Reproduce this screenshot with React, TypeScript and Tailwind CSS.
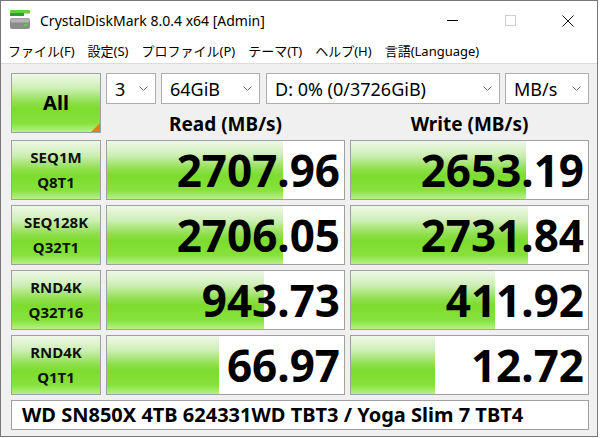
import React from 'react';

type Row = {
  top: string;
  bottom: string;
  read: string;
  readBar: number;
  write: string;
  writeBar: number;
};

const rows: Row[] = [
  { top: 'SEQ1M', bottom: 'Q8T1', read: '2707.96', readBar: 176, write: '2653.19', writeBar: 175 },
  { top: 'SEQ128K', bottom: 'Q32T1', read: '2706.05', readBar: 176, write: '2731.84', writeBar: 177 },
  { top: 'RND4K', bottom: 'Q32T16', read: '943.73', readBar: 157, write: '411.92', writeBar: 144 },
  { top: 'RND4K', bottom: 'Q1T1', read: '66.97', readBar: 112, write: '12.72', writeBar: 84 },
];

const menu = ['ファイル(F)', '設定(S)', 'プロファイル(P)', 'テーマ(T)', 'ヘルプ(H)', '言語(Language)'];

const green =
  'bg-[linear-gradient(to_bottom,#eef8e8_0%,#cdeeb4_25%,#8fe04e_48%,#7ddc2e_60%,#86e23c_85%,#b6f288_100%)]';

function Chevron() {
  return (
    <svg width="9" height="5" viewBox="0 0 9 5" className="shrink-0">
      <polyline points="0.5,0.5 4.5,4.5 8.5,0.5" fill="none" stroke="#6e6e6e" strokeWidth="1" />
    </svg>
  );
}

function Select({ value, width }: { value: string; width: string }) {
  return (
    <div
      className={`${width} h-[31px] bg-white border border-[#adadad] flex items-center pl-[8px] pr-[7px] text-[18px] text-black`}
    >
      <span className="flex-1 leading-none">{value}</span>
      <Chevron />
    </div>
  );
}

function AppIcon() {
  return (
    <svg width="20" height="20" viewBox="0 0 20 20">
      <rect x="0" y="0" width="20" height="3.5" rx="1" fill="#5fd045" />
      <rect x="0" y="3" width="14" height="3" rx="0.5" fill="#2f9e2c" />
      <rect x="0" y="8" width="20" height="11" rx="2" fill="#8c8c8c" />
      <rect x="0.5" y="8.5" width="19" height="4" rx="1.5" fill="#b4b4b4" />
      <rect x="14" y="14" width="3.5" height="2" fill="#55d040" />
    </svg>
  );
}

function ValueCell({ value, bar }: { value: string; bar: number }) {
  return (
    <div className="relative w-[239px] h-[60px] bg-white border border-[#a0a0a0] flex items-center justify-end pr-[4px]">
      <div className={`absolute left-0 top-0 bottom-0 ${green}`} style={{ width: bar }} />
      <span className="relative text-[44px] leading-none font-bold text-black">{value}</span>
    </div>
  );
}

export default function App() {
  return (
    <div className="w-[600px] h-[438px] bg-white">
      <div className="w-[598px] h-[437px] border border-[#777777] bg-white flex flex-col font-['Noto_Sans','Noto_Sans_CJK_JP',sans-serif] text-black">
        {/* Title bar */}
        <div className="h-[39px] flex items-center shrink-0">
          <div className="ml-[9px] mt-[-1px]">
            <AppIcon />
          </div>
          <span className="ml-[10px] text-[14px] leading-none">CrystalDiskMark 8.0.4 x64 [Admin]</span>
          <div className="ml-auto flex h-full">
            <div className="w-[58px] flex items-center justify-center">
              <div className="w-[11px] h-[1px] bg-black" />
            </div>
            <div className="w-[58px] flex items-center justify-center">
              <div className="w-[11px] h-[11px] border border-[#cfcfcf]" />
            </div>
            <div className="w-[58px] flex items-center justify-center">
              <svg width="12" height="12" viewBox="0 0 12 12">
                <path d="M0.5 0.5 L11.5 11.5 M11.5 0.5 L0.5 11.5" stroke="#111" strokeWidth="1" />
              </svg>
            </div>
          </div>
        </div>

        {/* Menu */}
        <div className="h-[24px] shrink-0 flex items-center border-b border-[#dcdcdc] pl-[7px] gap-[13px] text-[13px] leading-none">
          {menu.map((m) => (
            <span key={m}>{m}</span>
          ))}
        </div>

        {/* Client */}
        <div className="flex-1 bg-[#f0f0f0] pl-[10px] pt-[9px]">
          <div className="flex gap-[5px]">
            <div className={`relative w-[90px] h-[60px] border border-[#a0a0a0] ${green} flex items-center justify-center`}>
              <span className="text-[20px] font-bold leading-none">All</span>
              <div className="absolute right-0 bottom-0 w-0 h-0 border-l-[9px] border-l-transparent border-b-[9px] border-b-[#f57b10]" />
            </div>
            <div className="flex flex-col">
              <div className="flex">
                <Select value="3" width="w-[50px]" />
                <div className="w-[5px]" />
                <Select value="64GiB" width="w-[99px]" />
                <div className="w-[6px]" />
                <Select value="D: 0% (0/3726GiB)" width="w-[234px]" />
                <div className="w-[5px]" />
                <Select value="MB/s" width="w-[84px]" />
              </div>
              <div className="flex gap-[5px] mt-[9px] text-[19px] font-bold leading-[22px]">
                <div className="w-[239px] text-center">Read (MB/s)</div>
                <div className="w-[239px] text-center">Write (MB/s)</div>
              </div>
            </div>
          </div>

          <div className="flex flex-col gap-[5px] mt-[5px]">
            {rows.map((r, i) => (
              <div key={i} className="flex gap-[5px]">
                <div
                  className={`w-[90px] h-[60px] border border-[#a0a0a0] ${green} flex flex-col items-center justify-center text-[15px] font-bold leading-[25px] text-[#111]`}
                >
                  <span>{r.top}</span>
                  <span>{r.bottom}</span>
                </div>
                <ValueCell value={r.read} bar={r.readBar} />
                <ValueCell value={r.write} bar={r.writeBar} />
              </div>
            ))}
          </div>

          <div className="mt-[5px] w-[578px] h-[30px] bg-white border border-[#a0a0a0] flex items-center pl-[10px] text-[20px] font-bold leading-none">
            WD SN850X 4TB 624331WD TBT3 / Yoga Slim 7 TBT4
          </div>
        </div>
      </div>
    </div>
  );
}
